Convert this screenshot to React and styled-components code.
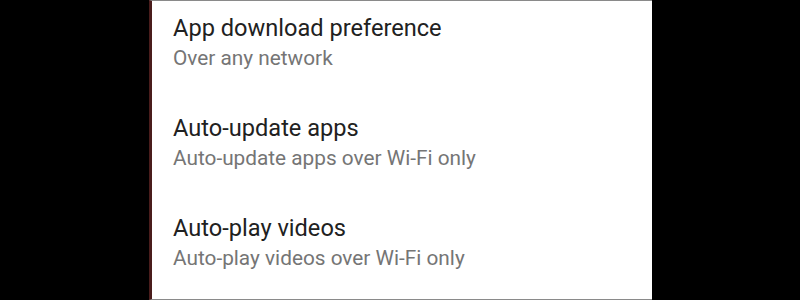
import React from "react";
import styled, { createGlobalStyle } from "styled-components";

const Global = createGlobalStyle`
  html, body { margin: 0; padding: 0; background: #000; }
  body { width: 800px; height: 300px; overflow: hidden; font-family: Roboto, "Noto Sans", sans-serif; }
`;

const Stage = styled.div`
  width: 800px;
  height: 300px;
  display: flex;
  justify-content: flex-start;
  background: #000;
`;

const Spacer = styled.div`
  width: 149px;
  flex: none;
`;

const Panel = styled.div`
  width: 503px;
  flex: none;
  height: 300px;
  box-sizing: border-box;
  background: #fff;
  border-left: 3px solid #4a1d1c;
  border-top: 1px solid #8a8a8a;
  border-bottom: 1px solid #8a8a8a;
  display: flex;
  flex-direction: column;
  padding-left: 21px;
`;

const Row = styled.div`
  height: 100px;
  flex: none;
  display: flex;
  flex-direction: column;
  padding-top: 12px;
  box-sizing: border-box;
`;

const Title = styled.div`
  font-size: 23.6px;
  line-height: 30px;
  color: #212121;
  white-space: nowrap;
`;

const Summary = styled.div`
  font-size: 20.8px;
  line-height: 26px;
  color: #757575;
  margin-top: 2px;
  white-space: nowrap;
`;

const items = [
  ["App download preference", "Over any network"],
  ["Auto-update apps", "Auto-update apps over Wi-Fi only"],
  ["Auto-play videos", "Auto-play videos over Wi-Fi only"],
];

export default function App() {
  return (
    <>
      <Global />
      <Stage>
        <Spacer />
        <Panel>
          {items.map(([t, s], i) => (
            <Row key={i}>
              <Title>{t}</Title>
              <Summary>{s}</Summary>
            </Row>
          ))}
        </Panel>
      </Stage>
    </>
  );
}
